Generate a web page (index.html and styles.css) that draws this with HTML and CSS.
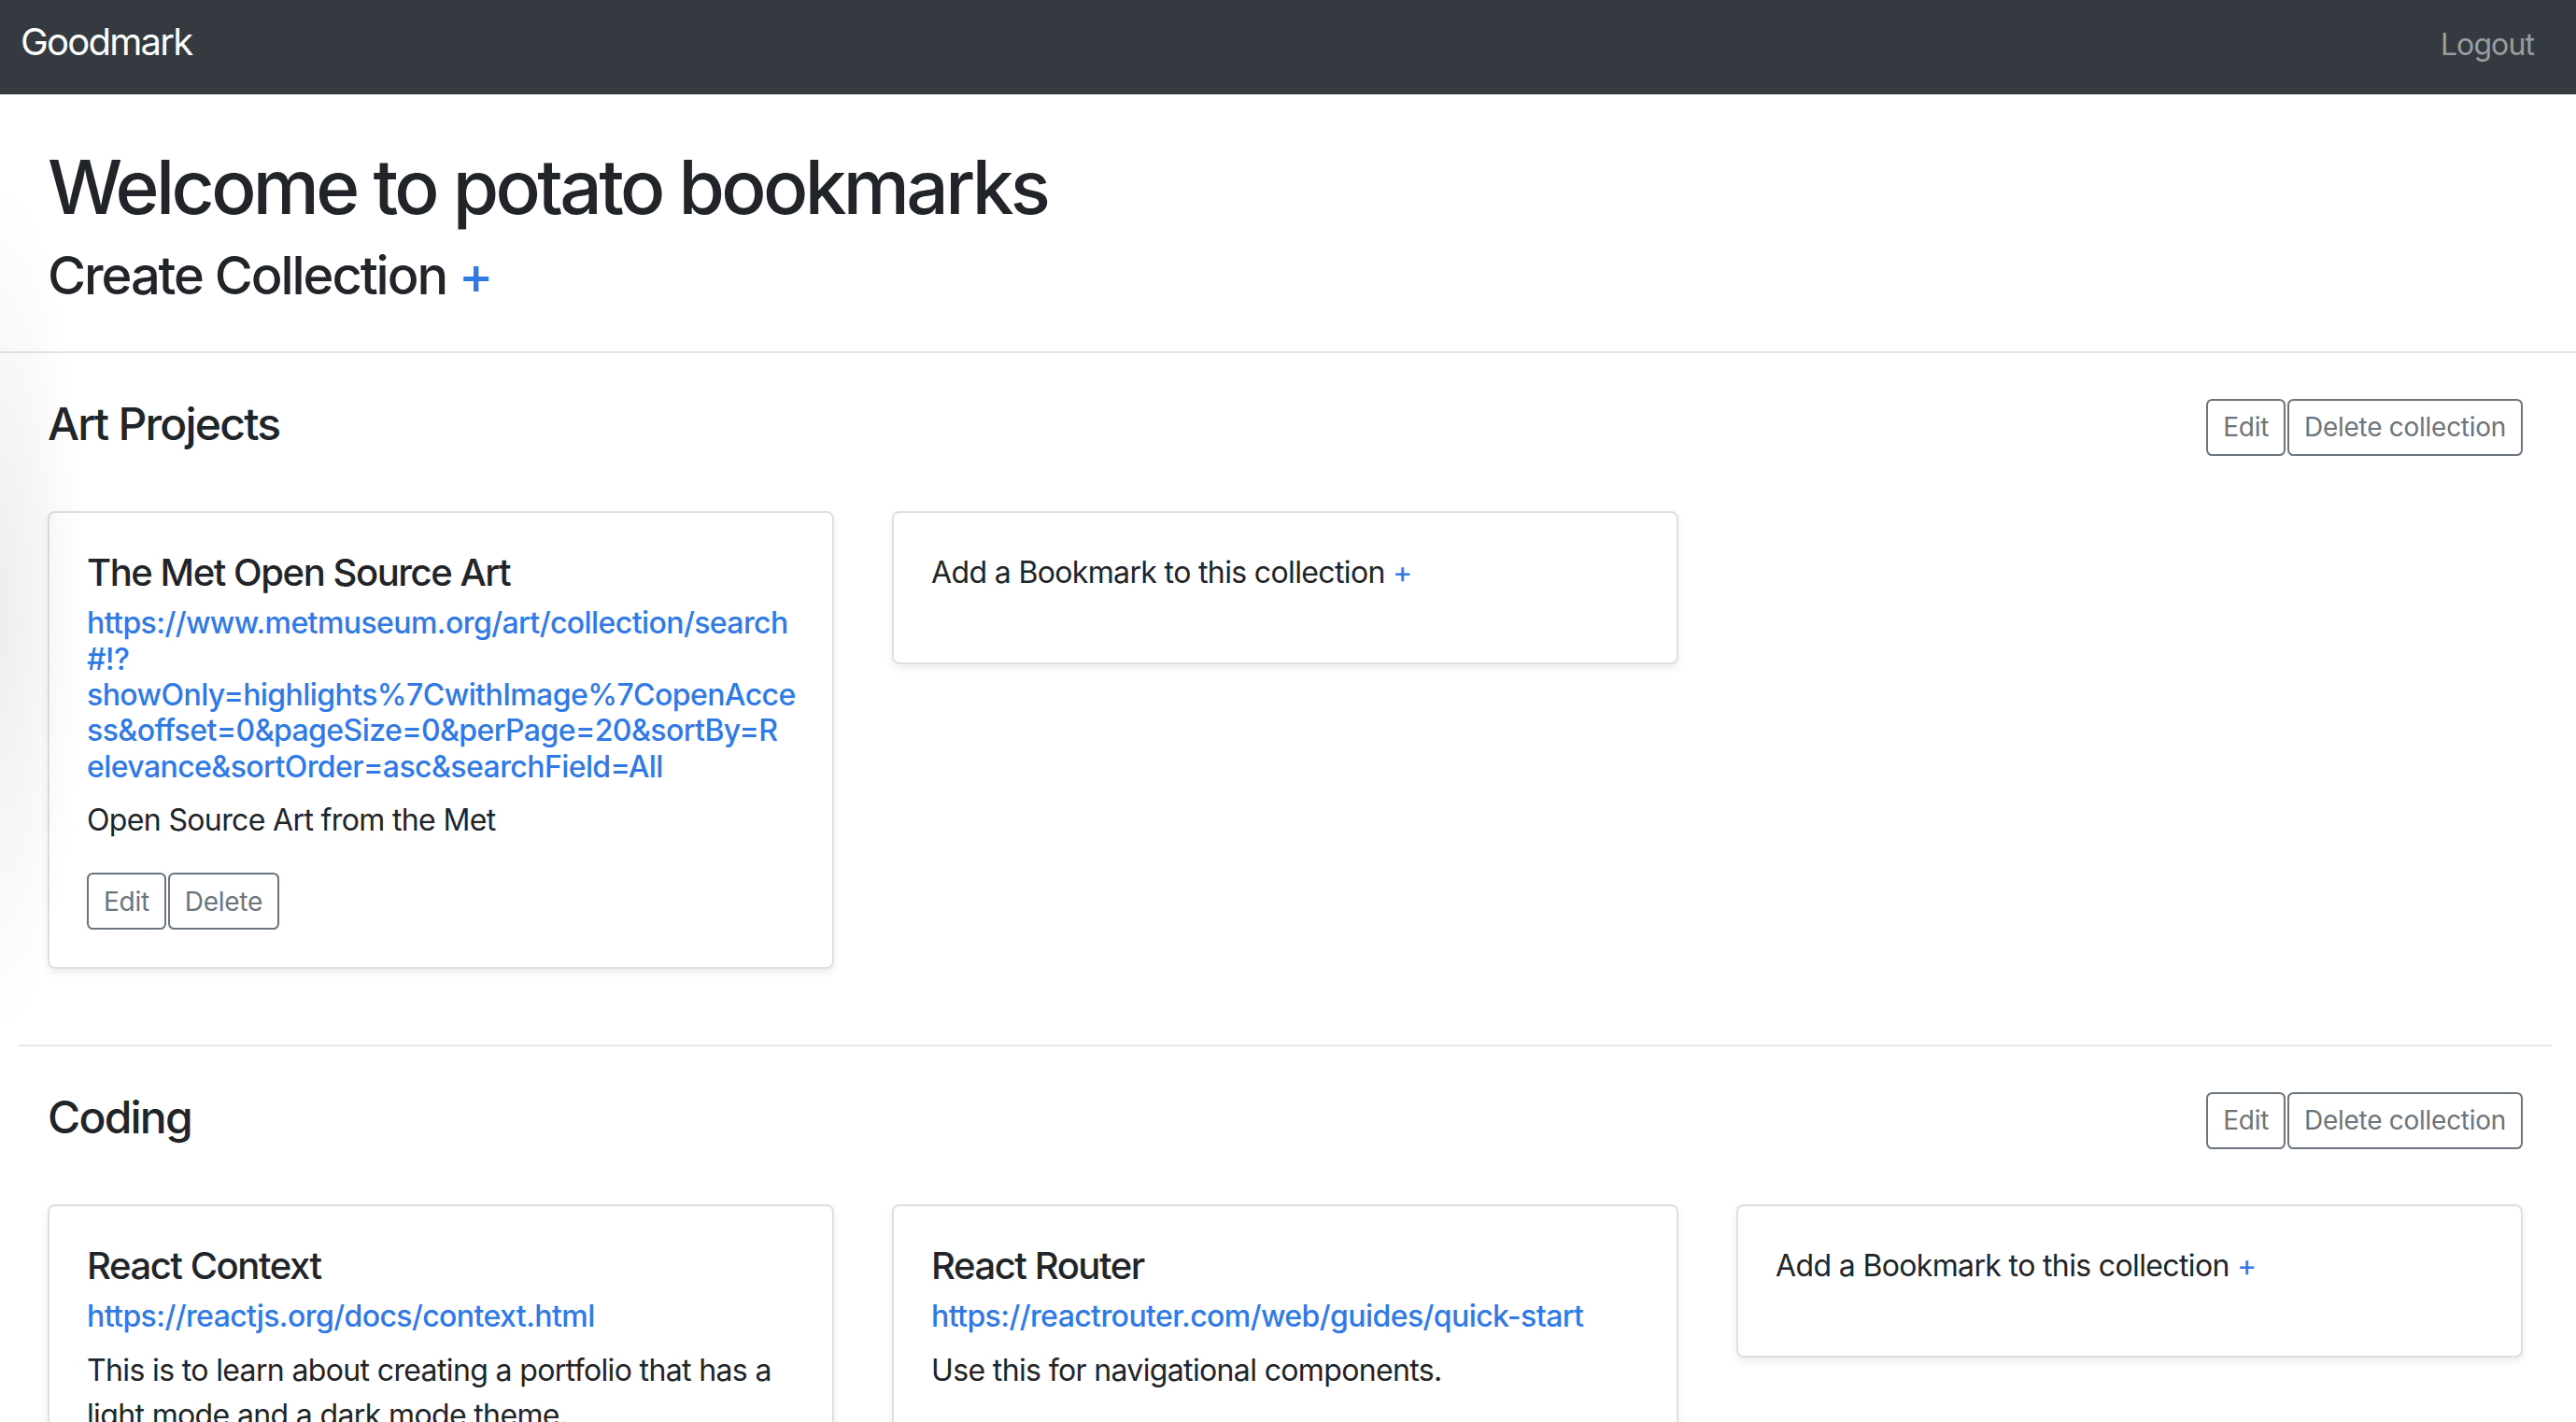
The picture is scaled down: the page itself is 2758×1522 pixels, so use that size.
FILE: index.html
```html
<!DOCTYPE html>
<html lang="en">
<head>
<meta charset="utf-8">
<title>Goodmark</title>
<link rel="stylesheet" href="styles.css">
</head>
<body>
<nav class="navbar">
  <a class="brand" href="#">Goodmark</a>
  <a class="nav-link" href="#">Logout</a>
</nav>
<main class="page">
  <header class="intro">
    <h1 class="title">Welcome to potato bookmarks</h1>
    <h3 class="create">Create Collection <span class="plus">+</span></h3>
  </header>

  <section class="collection">
    <div class="collection-head">
      <h4 class="collection-name">Art Projects</h4>
      <div class="btn-row head-btns">
        <button class="btn">Edit</button>
        <button class="btn">Delete collection</button>
      </div>
    </div>
    <div class="cards">
      <div class="card">
        <div class="card-body">
          <h5 class="card-title">The Met Open Source Art</h5>
          <h6 class="card-subtitle"><a href="#">https://www.metmuseum.org/art/collection/search<br>#!?<br>showOnly=highlights%7CwithImage%7CopenAcce<br>ss&amp;offset=0&amp;pageSize=0&amp;perPage=20&amp;sortBy=R<br>elevance&amp;sortOrder=asc&amp;searchField=All</a></h6>
          <p class="card-text">Open Source Art from the Met</p>
          <div class="btn-row">
            <button class="btn">Edit</button>
            <button class="btn">Delete</button>
          </div>
        </div>
      </div>
      <div class="card">
        <div class="card-body">
          <p class="card-text">Add a Bookmark to this collection <span class="plus">+</span></p>
        </div>
      </div>
    </div>
  </section>

  <hr class="divider">

  <section class="collection">
    <div class="collection-head">
      <h4 class="collection-name">Coding</h4>
      <div class="btn-row head-btns">
        <button class="btn">Edit</button>
        <button class="btn">Delete collection</button>
      </div>
    </div>
    <div class="cards">
      <div class="card">
        <div class="card-body">
          <h5 class="card-title">React Context</h5>
          <h6 class="card-subtitle"><a href="#">https://reactjs.org/docs/context.html</a></h6>
          <p class="card-text">This is to learn about creating a portfolio that has a light mode and a dark mode theme.</p>
          <div class="btn-row">
            <button class="btn">Edit</button>
            <button class="btn">Delete</button>
          </div>
        </div>
      </div>
      <div class="card">
        <div class="card-body">
          <h5 class="card-title">React Router</h5>
          <h6 class="card-subtitle"><a href="#">https://reactrouter.com/web/guides/quick-start</a></h6>
          <p class="card-text">Use this for navigational components.</p>
          <div class="btn-row">
            <button class="btn">Edit</button>
            <button class="btn">Delete</button>
          </div>
        </div>
      </div>
      <div class="card">
        <div class="card-body">
          <p class="card-text">Add a Bookmark to this collection <span class="plus">+</span></p>
        </div>
      </div>
    </div>
  </section>
</main>
</body>
</html>
```

FILE: styles.css
```css
* { box-sizing: border-box; }

html, body { margin: 0; padding: 0; }

body {
  font-family: Inter, "Liberation Sans", sans-serif;
  font-size: 32px;
  line-height: 1.5;
  letter-spacing: -0.02em;
  color: #212529;
  background: #ffffff;
  overflow-x: hidden;
}

h1, h3, h4, h5, h6 { margin: 0; font-weight: 500; line-height: 1.2; }

a { color: #2f7ae5; text-decoration: none; }

/* navbar */
.navbar {
  height: 101px;
  background: #343a40;
  display: flex;
  align-items: baseline;
  justify-content: space-between;
  padding: 21px 45px 0 22px;
}
.brand { font-size: 40px; line-height: 48px; letter-spacing: -0.044em; color: #ffffff; }
.nav-link { font-size: 32px; line-height: 48px; letter-spacing: -0.028em; color: rgba(255, 255, 255, 0.5); }

/* page */
.page { position: relative; }
.page::before {
  content: "";
  position: absolute;
  left: 0;
  top: 100px;
  width: 90px;
  height: 900px;
  background: radial-gradient(ellipse 90px 460px at 0 50%, rgba(0, 0, 0, 0.07), rgba(0, 0, 0, 0));
  pointer-events: none;
}

.intro {
  padding: 51px 51px 47px;
  border-bottom: 2px solid #e5e5e5;
}
.title { font-size: 80px; line-height: 96px; letter-spacing: -0.045em; margin-bottom: 14px; }
.create { font-size: 56px; line-height: 67.2px; letter-spacing: -0.037em; }
.plus { color: #2f7ae5; }

/* collections */
.collection { padding: 47px 57px 81px 51px; }
.collection-head {
  display: flex;
  justify-content: space-between;
  align-items: flex-start;
}
.collection-name { font-size: 48px; line-height: 57.6px; letter-spacing: -0.037em; }
.head-btns { margin-top: 1.5px; }

.btn-row { display: flex; gap: 2px; }
.btn {
  font-family: inherit;
  font-size: 28px;
  line-height: 42px;
  letter-spacing: -0.01em;
  padding: 7.5px 16px;
  border: 2px solid #6c757d;
  color: #6c757d;
  background: transparent;
  border-radius: 6.4px;
}

.divider {
  margin: 0 26px 0 20px;
  height: 0;
  border: 0;
  border-top: 2px solid #e6e6e6;
}

/* cards */
.cards {
  margin-top: 59.5px;
  display: grid;
  grid-template-columns: repeat(3, minmax(0, 1fr));
  gap: 62px;
  align-items: start;
}
.card {
  background: #ffffff;
  border: 2px solid rgba(0, 0, 0, 0.125);
  border-radius: 8px;
  box-shadow: 0 4px 8px rgba(0, 0, 0, 0.075);
}
.card-body { padding: 40px; }
.card-title { font-size: 40px; line-height: 48px; letter-spacing: -0.036em; margin-bottom: 24px; }
.card-subtitle {
  font-size: 32px;
  line-height: 38.4px;
  letter-spacing: -0.018em;
  margin-top: -13px;
  margin-bottom: 14px;
  white-space: nowrap;
}
.card-text { margin: 0 0 32px; }
```
